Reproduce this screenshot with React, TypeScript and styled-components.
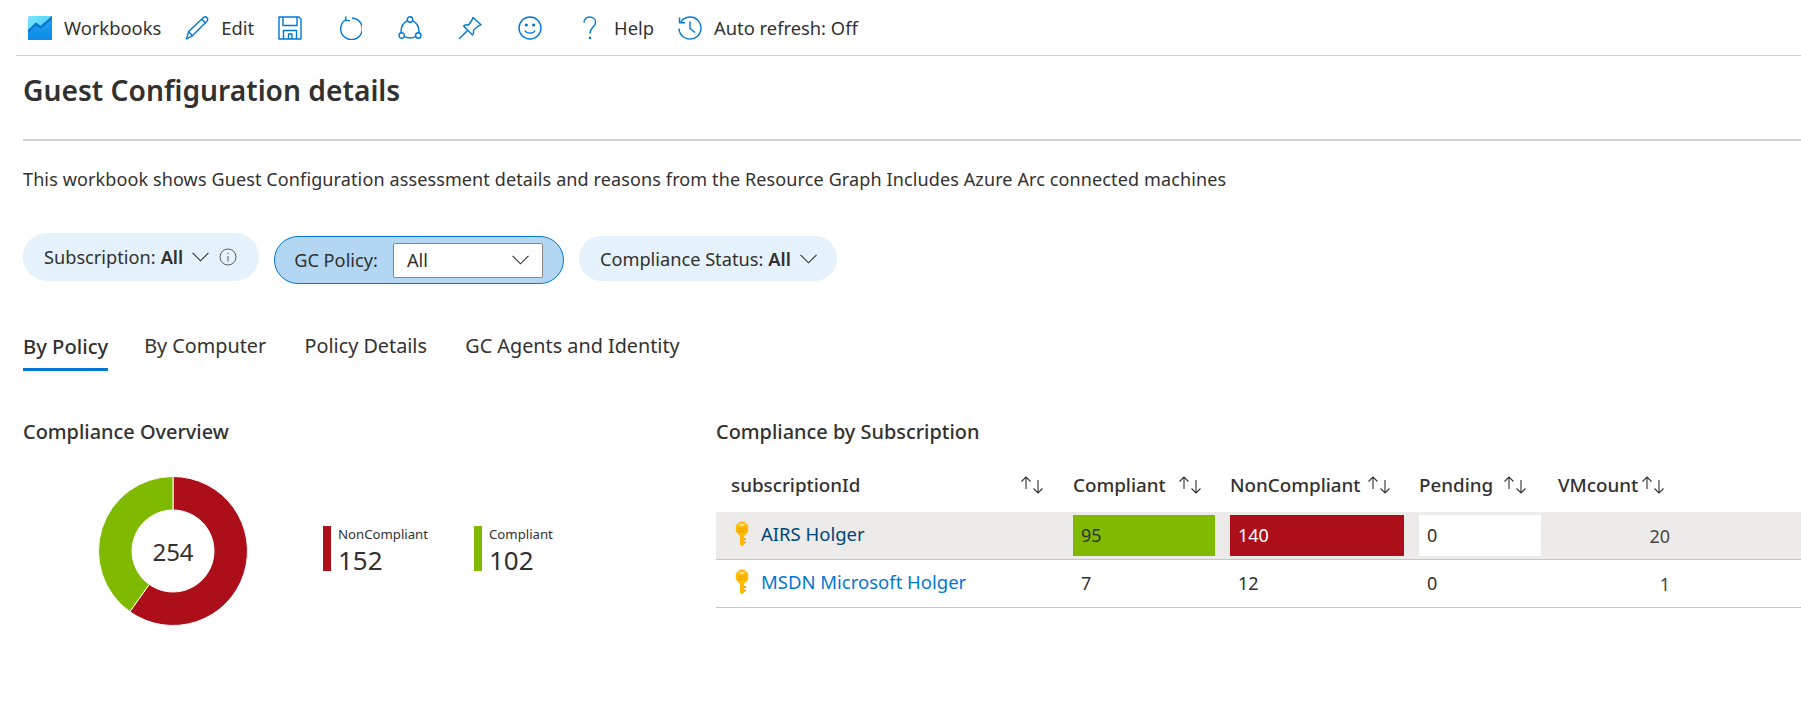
import { ReactNode } from 'react';
import styled, { createGlobalStyle } from 'styled-components';

const BLUE = '#0078d4';
const RED = '#ac0e1a';
const GREEN = '#7fba00';

const GlobalStyle = createGlobalStyle`
  html, body {
    margin: 0;
    background: #fff;
    overflow: hidden;
  }
  body {
    font-family: 'Noto Sans', 'Open Sans', sans-serif;
    color: #323130;
  }
`;

const BlueIcon = ({ children }: { children: ReactNode }) => (
  <svg
    width="24"
    height="24"
    viewBox="0 0 24 24"
    fill="none"
    stroke={BLUE}
    strokeWidth="1.4"
    strokeLinejoin="round"
  >
    {children}
  </svg>
);

const WorkbooksIcon = () => (
  <svg width="24" height="24" viewBox="0 0 24 24">
    <defs>
      <linearGradient id="wbSky" x1="0" y1="0" x2="1" y2="1">
        <stop offset="0" stopColor="#7ae6fd" />
        <stop offset="1" stopColor="#3ac4f5" />
      </linearGradient>
      <linearGradient id="wbArea" x1="0" y1="0" x2="0" y2="1">
        <stop offset="0" stopColor="#1fa5f2" />
        <stop offset="1" stopColor="#0c8ae6" />
      </linearGradient>
    </defs>
    <rect width="24" height="24" rx="1.5" fill="url(#wbSky)" />
    <path d="M0 24V14L8 6.5L12.5 10L24 0V24Z" fill="url(#wbArea)" />
    <path d="M0 14L8 6.5L12.5 10L24 0V3L12.5 13L8 9.5L0 17Z" fill="#0f75cf" />
  </svg>
);

const SortIcon = () => (
  <svg width="25" height="20" viewBox="0 0 25 20" fill="none" stroke="#323130" strokeWidth="1.1">
    <path d="M6 14V2M1.5 6.5L6 2L10.5 6.5" />
    <path d="M18 5V18M13.5 13.5L18 18L22.5 13.5" />
  </svg>
);

const Chevron = ({ width = 17 }: { width?: number }) => (
  <svg width={width} height="10" viewBox="0 0 17 10" fill="none" stroke="#323130" strokeWidth="1.1">
    <path d="M0.5 0.8L8.5 8.8L16.5 0.8" />
  </svg>
);

const InfoIcon = () => (
  <svg width="18" height="18" viewBox="0 0 18 18" fill="none" stroke="#605e5c" strokeWidth="1">
    <circle cx="9" cy="9" r="8" />
    <path d="M9 8V13.5M9 4.8V6.2" />
  </svg>
);

const KeyIcon = () => (
  <svg width="14" height="26" viewBox="0 0 14 26">
    <path
      d="M5 15L0.8 10.5V4.5L5 0.6H9L13.2 4.5V10.5L9 15V23.5L7 25.5L5 23.5Z"
      fill="#ffb900"
    />
    <path d="M9 17H10.8V19H9ZM9 20.5H10.8V22.5H9Z" fill="#eaa300" />
    <rect x="4.2" y="2.8" width="5.6" height="2.2" rx="1.1" fill="#ffe38a" />
    <rect x="3.5" y="7.5" width="7" height="1.2" fill="#eaa300" />
    <rect x="3.5" y="9.8" width="7" height="1.2" fill="#eaa300" />
  </svg>
);

const polar = (r: number, deg: number) => {
  const a = ((deg - 90) * Math.PI) / 180;
  return `${75 + r * Math.cos(a)} ${75 + r * Math.sin(a)}`;
};

const ringSlice = (from: number, to: number) => {
  const large = to - from > 180 ? 1 : 0;
  return `M${polar(74.5, from)}A74.5 74.5 0 ${large} 1 ${polar(74.5, to)}L${polar(41, to)}A41 41 0 ${large} 0 ${polar(41, from)}Z`;
};

const legend = [
  { label: 'NonCompliant', value: 152, color: RED },
  { label: 'Compliant', value: 102, color: GREEN },
];

const total = legend.reduce((sum, item) => sum + item.value, 0);
const redEnd = (legend[0].value / total) * 360;

const rows = [
  { name: 'AIRS Holger', compliant: 95, nonCompliant: 140, pending: 0, vmCount: 20, active: true },
  { name: 'MSDN Microsoft Holger', compliant: 7, nonCompliant: 12, pending: 0, vmCount: 1, active: false },
];

const App = () => {
  return (
    <>
      <GlobalStyle />
      <Toolbar>
        <ToolItem>
          <WorkbooksIcon />
          Workbooks
        </ToolItem>
        <ToolItem>
          <BlueIcon>
            <path d="M1.5 23L3.6 15.6L18.5 1.6C19.6 0.6 21 0.7 22 1.7C23 2.8 23 4.3 21.9 5.3L7.4 19.8Z" />
            <path d="M3.6 15.6L7.4 19.8M16.8 3.2L20.6 7" />
          </BlueIcon>
          Edit
        </ToolItem>
        <ToolIconOnly>
          <BlueIcon>
            <path d="M1 1H21L23 3V23H1Z" />
            <path d="M5 1V9.5H19V1M5.5 23V14.5H18.5V23M10.5 23V18H14V23" />
          </BlueIcon>
        </ToolIconOnly>
        <ToolIconOnly>
          <BlueIcon>
            <path d="M8 3.5A10.8 10.8 0 1 0 14 2" />
            <path d="M7.8 0.5V4.6H12" />
          </BlueIcon>
        </ToolIconOnly>
        <ToolIconOnly>
          <BlueIcon>
            <circle cx="12" cy="3.5" r="2.7" />
            <circle cx="3.7" cy="19.5" r="2.7" />
            <circle cx="20.3" cy="19.5" r="2.7" />
            <path d="M9.5 4.6C5.5 6.4 2.8 11 3 16.8M14.5 4.6C18.5 6.4 21.2 11 21 16.8M6.4 20.6C10 22.3 14 22.3 17.6 20.6" />
          </BlueIcon>
        </ToolIconOnly>
        <ToolIconOnly>
          <BlueIcon>
            <path d="M15 1.5L23 8.8L20.5 9.8L15.5 14.2C16 16 15.5 17.5 14.5 19L5.5 10C7.2 8.8 9 8.5 10.5 9L14 4Z" />
            <path d="M9.5 14.5L1 23" />
          </BlueIcon>
        </ToolIconOnly>
        <ToolIconOnly>
          <BlueIcon>
            <circle cx="12" cy="12" r="11" />
            <circle cx="8.3" cy="9" r="0.9" fill={BLUE} />
            <circle cx="15.7" cy="9" r="0.9" fill={BLUE} />
            <path d="M6.8 14.5C9 18 15 18 17.2 14.5" />
          </BlueIcon>
        </ToolIconOnly>
        <ToolItem>
          <BlueIcon>
            <path d="M6 6.5C6 3.2 8.6 1 11.7 1C15 1 17.6 3.2 17.6 6.2C17.6 10.8 12 11 12 17.5" />
            <circle cx="12" cy="22" r="0.6" fill={BLUE} />
          </BlueIcon>
          Help
        </ToolItem>
        <ToolItem>
          <BlueIcon>
            <path d="M2.8 6A11 11 0 1 1 1 12.5" />
            <path d="M1.5 1.5V6.8H7" />
            <path d="M12 5.5V12.5L17 16.5" />
          </BlueIcon>
          Auto refresh: Off
        </ToolItem>
      </Toolbar>

      <Main>
        <Title>Guest Configuration details</Title>
        <Divider />
        <Description>
          This workbook shows Guest Configuration assessment details and reasons from the Resource Graph Includes Azure Arc connected machines
        </Description>

        <FilterRow>
          <FilterPill $tall>
            Subscription: <b>All</b>
            <Chevron />
            <InfoIcon />
          </FilterPill>
          <EditingPill>
            GC Policy:
            <FilterSelect>
              All
              <Chevron width={19} />
            </FilterSelect>
          </EditingPill>
          <FilterPill>
            Compliance Status: <b>All</b>
            <Chevron />
          </FilterPill>
        </FilterRow>

        <Tabs>
          <Tab $active>By Policy</Tab>
          <Tab>By Computer</Tab>
          <Tab>Policy Details</Tab>
          <Tab>GC Agents and Identity</Tab>
        </Tabs>

        <Panels>
          <OverviewPanel>
            <SectionTitle>Compliance Overview</SectionTitle>
            <ChartRow>
              <Donut>
                <svg width="150" height="150" viewBox="0 0 150 150">
                  <path d={ringSlice(0, redEnd)} fill={RED} stroke="#fff" strokeWidth="1" />
                  <path d={ringSlice(redEnd, 360)} fill={GREEN} stroke="#fff" strokeWidth="1" />
                </svg>
                <DonutTotal>{total}</DonutTotal>
              </Donut>
              <Legend>
                {legend.map((item) => (
                  <LegendItem key={item.label} $color={item.color}>
                    <LegendLabel>{item.label}</LegendLabel>
                    <LegendValue>{item.value}</LegendValue>
                  </LegendItem>
                ))}
              </Legend>
            </ChartRow>
          </OverviewPanel>

          <TablePanel>
            <SectionTitle>Compliance by Subscription</SectionTitle>
            <HeaderRow>
              <HeaderCell $first>
                subscriptionId
                <SortSlot $left={304}>
                  <SortIcon />
                </SortSlot>
              </HeaderCell>
              <HeaderCell>
                Compliant
                <SortSlot $left={105}>
                  <SortIcon />
                </SortSlot>
              </HeaderCell>
              <HeaderCell>
                NonCompliant
                <SortSlot $left={137}>
                  <SortIcon />
                </SortSlot>
              </HeaderCell>
              <HeaderCell>
                Pending
                <SortSlot $left={84}>
                  <SortIcon />
                </SortSlot>
              </HeaderCell>
              <HeaderCell>
                VMcount
                <SortSlot $left={83}>
                  <SortIcon />
                </SortSlot>
              </HeaderCell>
            </HeaderRow>
            {rows.map((row) => (
              <DataRow key={row.name} $active={row.active}>
                <NameCell>
                  <KeyIcon />
                  <NameLink $active={row.active}>{row.name}</NameLink>
                </NameCell>
                <ValueCell $bg={row.active ? GREEN : undefined} $width={142}>
                  {row.compliant}
                </ValueCell>
                <ValueCell $bg={row.active ? RED : undefined} $fg={row.active ? '#fff' : undefined} $width={174}>
                  {row.nonCompliant}
                </ValueCell>
                <ValueCell $bg={row.active ? '#fff' : undefined} $width={122}>
                  {row.pending}
                </ValueCell>
                <CountCell>{row.vmCount}</CountCell>
              </DataRow>
            ))}
          </TablePanel>
        </Panels>
      </Main>
    </>
  );
};

export default App;

const Toolbar = styled.div`
  display: flex;
  align-items: center;
  gap: 24px;
  height: 55px;
  margin-left: 16px;
  padding-left: 12px;
  border-bottom: 1px solid #d2d0ce;
  font-size: 18.35px;
`;

const ToolItem = styled.div`
  display: flex;
  align-items: center;
  gap: 12px;
  white-space: nowrap;
  & > svg {
    flex-shrink: 0;
  }
`;

const ToolIconOnly = styled(ToolItem)`
  padding-right: 12px;
`;

const Main = styled.div`
  padding-left: 23px;
`;

const Title = styled.h1`
  margin: 0;
  padding-top: 15px;
  height: 66px;
  box-sizing: border-box;
  font-size: 28.2px;
  line-height: 38px;
  font-weight: 600;
  color: #323130;
`;

const Divider = styled.div`
  height: 2px;
  margin-top: 17px;
  background: #d2d0ce;
`;

const Description = styled.p`
  margin: 26px 0 0;
  font-size: 18px;
  line-height: 24px;
  letter-spacing: 0.12px;
  color: #323130;
  white-space: nowrap;
`;

const FilterRow = styled.div`
  display: flex;
  align-items: flex-start;
  gap: 15px;
  margin-top: 42px;
  height: 50px;
  font-size: 18.2px;
`;

const FilterPill = styled.div<{ $tall?: boolean }>`
  display: flex;
  align-items: center;
  gap: 5px;
  box-sizing: border-box;
  height: ${({ $tall }) => ($tall ? '48px' : '45px')};
  margin-top: ${({ $tall }) => ($tall ? '0' : '3px')};
  padding: ${({ $tall }) => ($tall ? '0 22px 0 21px' : '0 20px 0 21px')};
  border-radius: 24px;
  background: #e5f1fb;
  white-space: nowrap;

  & > b {
    font-weight: 600;
  }
  & > svg {
    margin-left: 4px;
  }
  & > svg + svg {
    margin-left: 5px;
  }
`;

const EditingPill = styled.div`
  display: flex;
  align-items: center;
  gap: 15px;
  box-sizing: border-box;
  height: 48px;
  margin-top: 3px;
  padding: 0 20px 0 19px;
  border: 1px solid ${BLUE};
  border-radius: 24px;
  background: #b3d6f2;
  white-space: nowrap;
`;

const FilterSelect = styled.div`
  display: flex;
  align-items: center;
  justify-content: space-between;
  box-sizing: border-box;
  width: 150px;
  height: 35px;
  padding: 0 12px 0 13px;
  border: 1px solid #8a8886;
  border-radius: 2px;
  background: #fff;
`;

const Tabs = styled.div`
  display: flex;
  gap: 38.4px;
  margin-top: 44px;
  font-size: 19.8px;
`;

const Tab = styled.div<{ $active?: boolean }>`
  box-sizing: border-box;
  height: 44px;
  line-height: 38px;
  font-size: ${({ $active }) => ($active ? '20.2px' : 'inherit')};
  font-weight: ${({ $active }) => ($active ? 500 : 400)};
  margin-right: ${({ $active }) => ($active ? '-2.4px' : '0')};
  border-bottom: 3px solid ${({ $active }) => ($active ? BLUE : 'transparent')};
`;

const Panels = styled.div`
  display: grid;
  grid-template-columns: 693px 1fr;
  margin-top: 49px;
`;

const OverviewPanel = styled.section``;

const SectionTitle = styled.h2`
  margin: 0;
  font-size: 19.9px;
  line-height: 24px;
  font-weight: 500;
  color: #323130;
`;

const ChartRow = styled.div`
  display: flex;
  align-items: center;
  gap: 75px;
  margin: 32px 0 0 75px;
`;

const Donut = styled.div`
  position: relative;
  width: 150px;
  height: 150px;
  & > svg {
    display: block;
  }
`;

const DonutTotal = styled.div`
  position: absolute;
  inset: 0;
  display: flex;
  align-items: center;
  justify-content: center;
  font-size: 24px;
`;

const Legend = styled.div`
  display: grid;
  grid-template-columns: 151px 120px;
  margin-top: -5px;
`;

const LegendItem = styled.div<{ $color: string }>`
  position: relative;
  height: 45px;
  padding-left: 7px;
  border-left: 8px solid ${({ $color }) => $color};
`;

const LegendLabel = styled.div`
  font-size: 13.2px;
  line-height: 16px;
  color: #323130;
`;

const LegendValue = styled.div`
  margin-top: 3px;
  font-size: 26px;
  line-height: 30px;
  color: #323130;
`;

const TablePanel = styled.section``;

const tableColumns = '357px 157px 189px 139px 1fr';

const HeaderRow = styled.div`
  display: grid;
  grid-template-columns: ${tableColumns};
  align-items: center;
  height: 55px;
  margin-top: 13px;
  font-size: 18.8px;
  font-weight: 500;
`;

const HeaderCell = styled.div<{ $first?: boolean }>`
  position: relative;
  padding-left: ${({ $first }) => ($first ? '15px' : '0')};
  white-space: nowrap;
`;

const SortSlot = styled.span<{ $left: number }>`
  position: absolute;
  top: 3px;
  left: ${({ $left }) => $left}px;
  line-height: 0;
`;

const DataRow = styled.div<{ $active: boolean }>`
  display: grid;
  grid-template-columns: ${tableColumns};
  align-items: center;
  box-sizing: border-box;
  height: 48px;
  border-bottom: 1px solid #c8c6c4;
  background: ${({ $active }) => ($active ? '#edebe9' : '#fff')};
  font-size: 18px;
`;

const NameCell = styled.div`
  display: flex;
  align-items: center;
  gap: 12px;
  padding: 0 0 4px 19px;
`;

const NameLink = styled.span<{ $active: boolean }>`
  color: ${({ $active }) => ($active ? '#004578' : BLUE)};
  font-size: 18.5px;
`;

const ValueCell = styled.div<{ $bg?: string; $fg?: string; $width: number }>`
  display: flex;
  align-items: center;
  box-sizing: border-box;
  width: ${({ $width }) => $width}px;
  height: 41px;
  padding: 0 0 1px 8px;
  background: ${({ $bg }) => $bg ?? 'transparent'};
  color: ${({ $fg }) => $fg ?? '#323130'};
`;

const CountCell = styled.div`
  width: 112px;
  text-align: right;
  color: #484644;
`;
